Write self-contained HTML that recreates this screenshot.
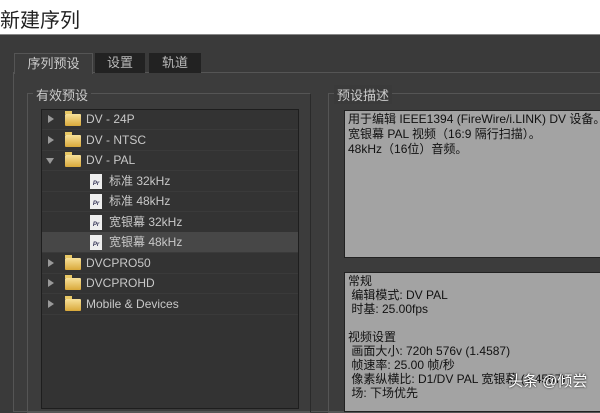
<!DOCTYPE html><html><head><meta charset="utf-8"><style>
*{margin:0;padding:0;box-sizing:border-box}
body{width:600px;height:400px;overflow:hidden;background:#3a3a3a;font-family:"Liberation Sans","Noto Sans CJK SC",sans-serif;position:relative}
.a{position:absolute}
.top{left:0;top:0;width:600px;height:35px;background:#fff;border-bottom:1px solid #888}
.title{left:0;top:4px;font-size:20px;color:#222}
.tab{top:53px;height:20px;font-size:13px;color:#ccc;text-align:center;line-height:20px}
.row{left:42px;width:256px;height:21px;border-bottom:1px solid #3a3a3a;font-size:12px;color:#c8c8c8;line-height:20px}
.tri{position:absolute;left:6px;top:6px;width:0;height:0;border-left:6px solid #999;border-top:4px solid transparent;border-bottom:4px solid transparent}
.trd{position:absolute;left:4px;top:8px;border-top:6px solid #999;border-left:4px solid transparent;border-right:4px solid transparent}
.fold{position:absolute;left:23px;top:5px;width:16px;height:12px;background:linear-gradient(#f7e19a,#d9a93a);border-radius:1px}
.fold:before{content:"";position:absolute;left:0;top:-3px;width:7px;height:3px;background:#e8c865}
.doc{position:absolute;left:48px;top:3px;width:12px;height:15px;background:#eee;font-size:6px;color:#335;line-height:20px;text-align:center;font-weight:bold}
.desc{background:#a3a3a3;border:1px solid #222;font-size:12px;color:#111;line-height:15px;padding:1px 3px}
</style></head><body>
<div class="a top"></div><div class="a title">新建序列</div>
<div class="a" style="left:13px;top:72px;width:600px;height:340px;border:1px solid #555;background:#3c3c3c"></div>
<div class="a tab" style="left:14px;width:79px;background:#3c3c3c;border:1px solid #555;border-bottom:none;height:21px">序列预设</div>
<div class="a tab" style="left:95px;width:50px;background:#222;color:#bbb">设置</div>
<div class="a tab" style="left:149px;width:52px;background:#222;color:#bbb">轨道</div>
<div class="a" style="left:27px;top:93px;width:284px;height:320px;border:1px solid #555;border-right-color:#2a2a2a"></div>
<div class="a" style="left:33px;top:85px;font-size:13px;color:#ccc;background:#3c3c3c;padding:0 3px">有效预设</div>
<div class="a" style="left:41px;top:109px;width:258px;height:300px;background:#333;border:1px solid #1e1e1e"></div>
<div class="a row" style="top:109px"><i class="tri"></i><i class="fold"></i><span style="margin-left:44px">DV - 24P</span></div>
<div class="a row" style="top:130px"><i class="tri"></i><i class="fold"></i><span style="margin-left:44px">DV - NTSC</span></div>
<div class="a row" style="top:150px"><i class="trd"></i><i class="fold"></i><span style="margin-left:44px">DV - PAL</span></div>
<div class="a row" style="top:171px"><i class="doc">Pr</i><span style="margin-left:67px">标准 32kHz</span></div>
<div class="a row" style="top:191px"><i class="doc">Pr</i><span style="margin-left:67px">标准 48kHz</span></div>
<div class="a row" style="top:212px"><i class="doc">Pr</i><span style="margin-left:67px">宽银幕 32kHz</span></div>
<div class="a row" style="top:232px;background:#474747"><i class="doc">Pr</i><span style="margin-left:67px">宽银幕 48kHz</span></div>
<div class="a row" style="top:253px"><i class="tri"></i><i class="fold"></i><span style="margin-left:44px">DVCPRO50</span></div>
<div class="a row" style="top:273px"><i class="tri"></i><i class="fold"></i><span style="margin-left:44px">DVCPROHD</span></div>
<div class="a row" style="top:294px"><i class="tri"></i><i class="fold"></i><span style="margin-left:44px">Mobile &amp; Devices</span></div>
<div class="a" style="left:328px;top:93px;width:290px;height:320px;border:1px solid #555"></div>
<div class="a" style="left:334px;top:85px;font-size:13px;color:#ccc;background:#3a3a3a;padding:0 3px">预设描述</div>
<div class="a desc" style="left:344px;top:110px;width:270px;height:148px">用于编辑 IEEE1394 (FireWire/i.LINK) DV 设备。<br>宽银幕 PAL 视频（16:9 隔行扫描）。<br>48kHz（16位）音频。</div>
<div class="a desc" style="left:344px;top:272px;width:270px;height:140px;line-height:14px">常规<br>&nbsp;编辑模式: DV PAL<br>&nbsp;时基: 25.00fps<br><br>视频设置<br>&nbsp;画面大小: 720h 576v (1.4587)<br>&nbsp;帧速率: 25.00 帧/秒<br>&nbsp;像素纵横比: D1/DV PAL 宽银幕 (1.4587)<br>&nbsp;场: 下场优先</div>
<div class="a" style="left:508px;top:370px;font-size:15px;color:#fff;text-shadow:0 0 2px #000">头条 @倾尝</div>
</body></html>
